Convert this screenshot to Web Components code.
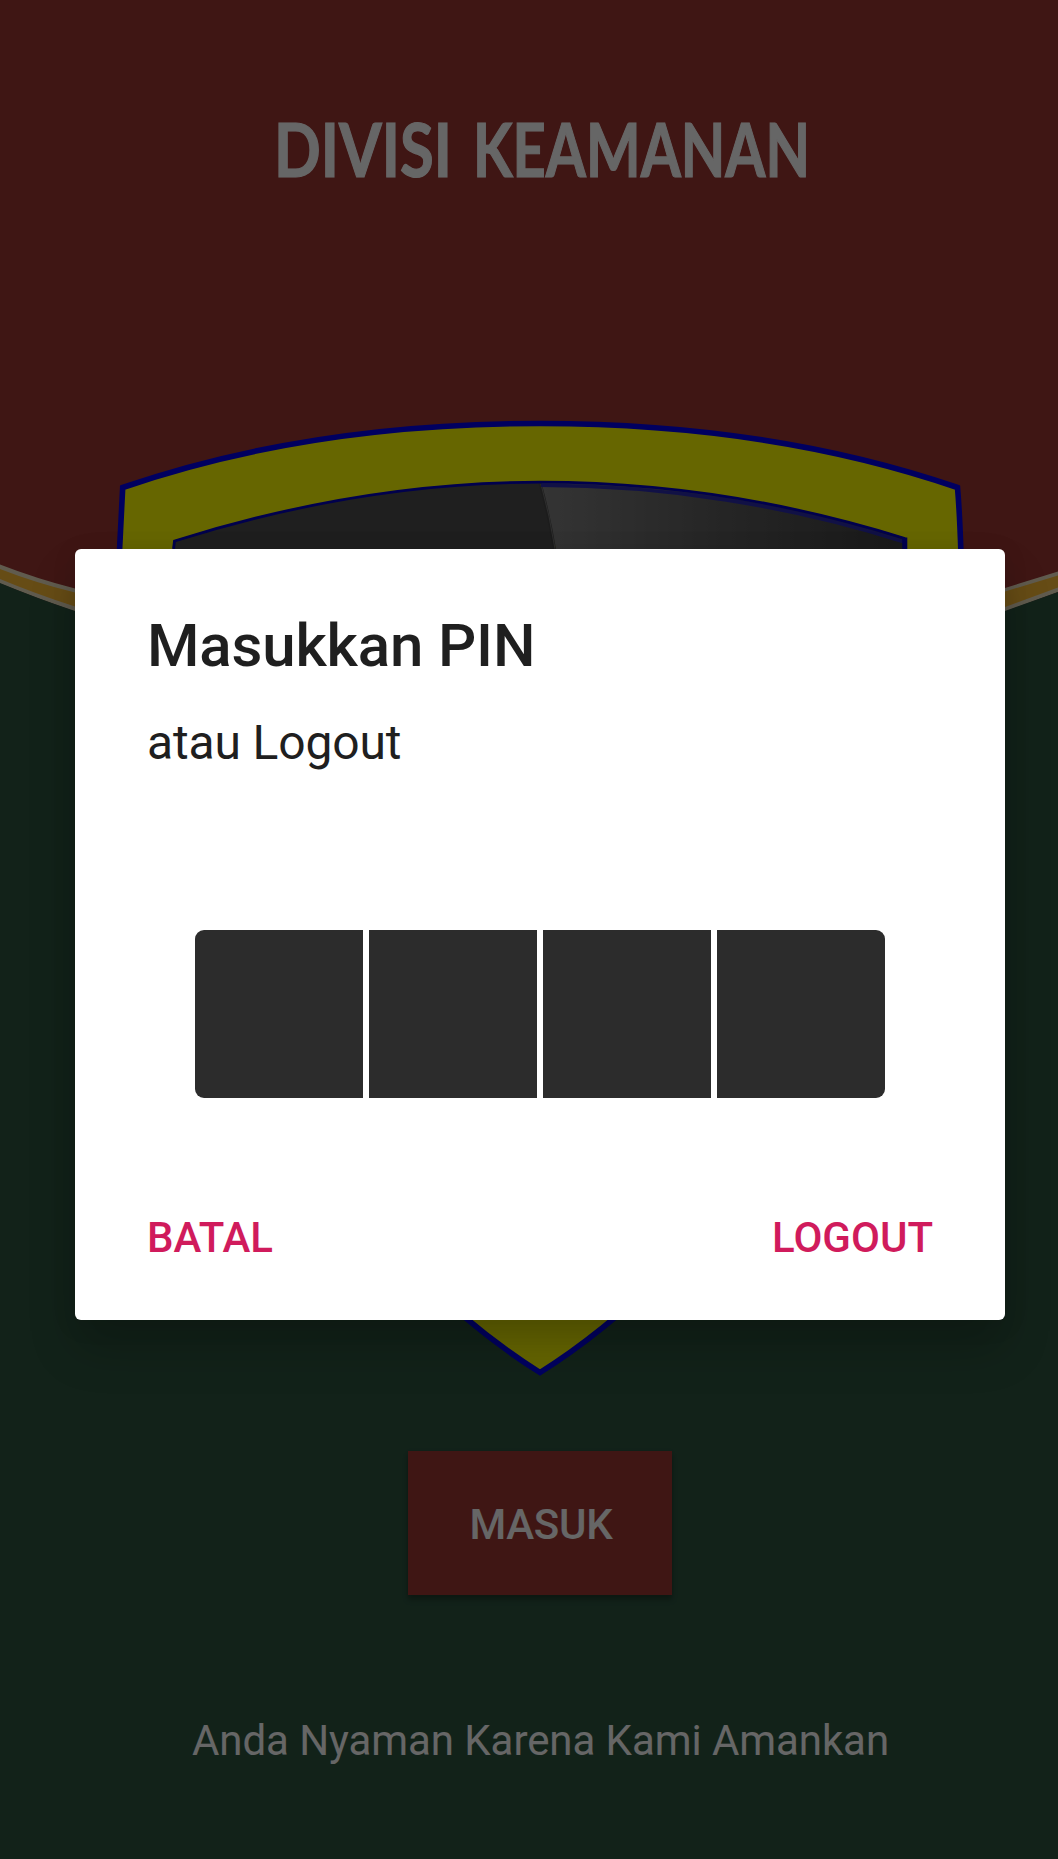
<!DOCTYPE html>
<html lang="id">
<head>
<meta charset="utf-8">
<title>Divisi Keamanan</title>
<style>
  html, body { margin: 0; padding: 0; }
  body { width: 1058px; height: 1859px; overflow: hidden; font-family: Roboto, "Liberation Sans", sans-serif; background: #2d5540; }
</style>
</head>
<body>
<security-app></security-app>

<script>
const define = (name, html) => customElements.define(name, class extends HTMLElement {
  constructor() {
    super();
    this.attachShadow({ mode: 'open' }).innerHTML = html;
  }
});

/* Red and green backdrop parted by a gold ribbon */
define('page-backdrop', `
<style>:host{display:block;width:1058px;height:1859px} svg{display:block}</style>
<svg width="1058" height="1859" viewBox="0 0 1058 1859" aria-hidden="true">
  <rect width="1058" height="1859" fill="#9e3733"/>
  <path d="M0 564.5Q36 578.5 75 588.5C350 665 730 665 1005 588L1058 571.5V592L1005 611.5C730 705 350 705 75 611.5Q36 598 0 583.5Z" fill="#f0e4c4"/>
  <path d="M0 569Q36 583 75 592.5C350 669 730 669 1005 591.5L1058 575.5V587.5L1005 607C730 700 350 700 75 606.5Q36 594 0 579Z" fill="#ffbd35"/>
  <path d="M0 583Q36 598 75 611C350 705 730 705 1005 611L1058 592V1859H0Z" fill="#2d5540"/>
</svg>`);

define('shield-emblem', `
<style>:host{display:block;width:850px;height:958px} svg{display:block;overflow:visible}</style>
<svg width="850" height="958" viewBox="115 420 850 958" aria-hidden="true">
  <defs>
    <linearGradient id="shine" gradientUnits="userSpaceOnUse" x1="545" y1="0" x2="905" y2="0">
      <stop offset="0" stop-color="#828282"/><stop offset=".5" stop-color="#5d5d5d"/><stop offset="1" stop-color="#414141"/>
    </linearGradient>
  </defs>
  <path d="M122.7 487.5C255 442 395 423.5 540 423.5S825 442 957.5 487.5C959 505 960 525 960.8 549C976 1000 680 1285 540 1372.5C400 1285 104 1000 119.6 549Z" fill="#ff0" stroke="#0000f0" stroke-width="5.6"/>
  <path d="M174.5 541C292 504 415 482.5 540 482.5L556 549V1250C300 1120 173 880 173.5 549Z" fill="#4e4e4e"/>
  <path d="M540 482.5C665 482.5 790 503 904.5 539V549C904 880 780 1120 540 1260L556 549Z" fill="url(#shine)"/>
  <path d="M540 483Q549 515 554.5 549" fill="none" stroke="#484848" stroke-width="3"/>
  <path d="M541 484Q550 516 555 549" fill="none" stroke="#757575" stroke-width="1"/>
  <path d="M541 485.3C665 485.3 790 505.5 903 541.5" fill="none" stroke="#2c2cb0" stroke-width="3.6"/>
  <path d="M173.5 549L174.5 541C292 504 415 482.2 540 482.2S790 502.5 905 538.5" fill="none" stroke="#0000c0" stroke-width="2.8"/>
  <path d="M904.8 537.5V549" fill="none" stroke="#0000c8" stroke-width="5"/>
</svg>`);

define('page-title', `
<style>:host{display:block;width:1058px;height:140px} svg{display:block}
text{font:700 75.5px Lato,"Open Sans",sans-serif;fill:#fff;stroke:#fff;stroke-width:1.2px}</style>
<svg width="1058" height="140" viewBox="0 80 1058 140">
  <text y="177" x="274" textLength="178" lengthAdjust="spacingAndGlyphs">DIVISI</text>
  <text y="177" x="473" textLength="337" lengthAdjust="spacingAndGlyphs">KEAMANAN</text>
</svg>`);

define('solid-button', `
<style>:host{display:flex;align-items:center;justify-content:center;width:264px;height:144px;background:#9e3733;color:#fff;
font-weight:500;font-size:42px;line-height:49px;letter-spacing:-.25px;box-shadow:0 5px 5px rgba(0,0,0,.25),0 1px 4px rgba(0,0,0,.12)}
span{padding-top:2px;padding-left:2px}</style><span><slot></slot></span>`);

define('login-screen', `
<style>
:host{display:flex;flex-direction:column;align-items:center;width:1058px;height:1859px}
page-title{margin-top:80px}
shield-emblem{margin-top:200px;margin-left:22px}
solid-button{margin-top:73px;margin-left:22px}
p{margin:121px 0 0 23px;font-size:42px;line-height:50px;letter-spacing:-.07px;color:#fff;white-space:nowrap}
</style>
<page-title></page-title>
<shield-emblem></shield-emblem>
<solid-button>MASUK</solid-button>
<p>Anda Nyaman Karena Kami Amankan</p>`);

define('pin-entry', `
<style>:host{display:flex;gap:6px;width:690px;height:168px;border-radius:9px;overflow:hidden}
i{flex:1;background:#2c2c2c}</style><i></i><i></i><i></i><i></i>`);

define('text-button', `
<style>:host{display:block;color:#d01b5c;font-weight:500;font-size:42px;line-height:50px;white-space:nowrap}</style><slot></slot>`);

define('pin-dialog', `
<style>
:host{display:flex;flex-direction:column;box-sizing:border-box;width:930px;height:771px;padding:62px 72px 0;border-radius:6px;
background:#fff;color:#1f1f1f;box-shadow:0 28px 48px rgba(0,0,0,.2),0 4px 24px rgba(0,0,0,.1)}
h1{margin:0;font-size:60px;line-height:70px;font-weight:500;letter-spacing:-.15px}
p{margin:34px 0 0;font-size:48px;line-height:56px;letter-spacing:-.15px}
pin-entry{align-self:center;margin-top:159px}
footer{display:flex;justify-content:space-between;margin-top:115px}
</style>
<h1>Masukkan PIN</h1>
<p>atau Logout</p>
<pin-entry></pin-entry>
<footer><text-button>BATAL</text-button><text-button>LOGOUT</text-button></footer>`);

define('security-app', `
<style>
:host{display:grid;width:1058px;height:1859px;overflow:hidden}
:host>*{grid-area:1/1}
.scrim{background:rgba(0,0,0,.6);z-index:1}
pin-dialog{z-index:2;margin:549px 0 0 75px}
</style>
<page-backdrop></page-backdrop>
<login-screen></login-screen>
<div class="scrim"></div>
<pin-dialog></pin-dialog>`);
</script>
</body>
</html>
